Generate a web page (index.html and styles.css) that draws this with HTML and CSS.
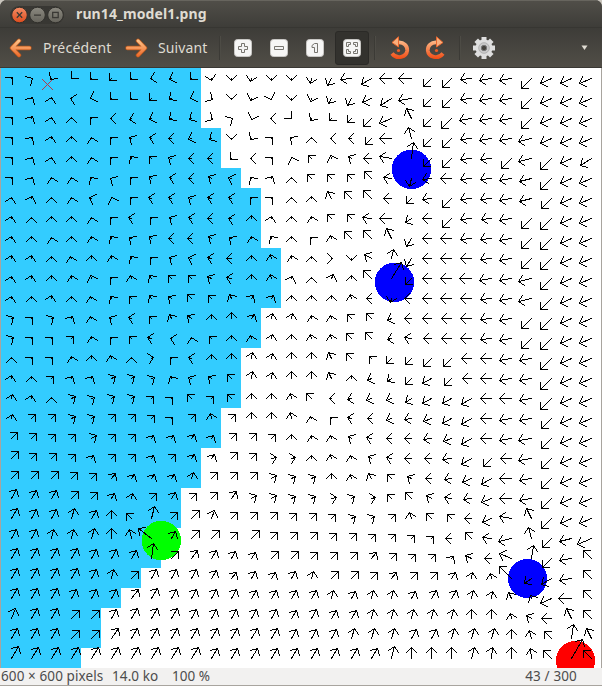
FILE: index.html
```html
<!DOCTYPE html>
<html lang="fr">
<head>
<meta charset="utf-8">
<title>run14_model1.png</title>
<link rel="stylesheet" href="styles.css">
</head>
<body>
<div class="window">
  <header class="titlebar">
    <svg class="controls" width="54" height="18" viewBox="0 0 54 18">
      <defs>
        <linearGradient id="close" x2="0" y2="1"><stop stop-color="#f58d66"/><stop offset="1" stop-color="#dd4b1c"/></linearGradient>
        <linearGradient id="plain" x2="0" y2="1"><stop stop-color="#8b8980"/><stop offset="1" stop-color="#65635b"/></linearGradient>
      </defs>
      <rect x="0" y="0" width="54" height="18" rx="9" fill="#383733"/>
      <g stroke="#31302c">
        <circle cx="9.5" cy="9" r="7.8" fill="url(#close)"/>
        <circle cx="27.5" cy="9" r="7.8" fill="url(#plain)"/>
        <circle cx="45.5" cy="9" r="7.8" fill="url(#plain)"/>
      </g>
      <g fill="none" stroke="#3a3935" stroke-width="1.3">
        <path d="M6.8 6.3l5.4 5.4M12.2 6.3l-5.4 5.4M24 9.2h7"/>
        <rect x="42.7" y="6.4" width="5.5" height="5.2"/>
      </g>
    </svg>
    <h1 class="title">run14_model1.png</h1>
  </header>
  <nav class="toolbar">
    <svg class="arrow" width="24" height="20" viewBox="0 0 24 20">
      <defs><linearGradient id="or" gradientUnits="userSpaceOnUse" x1="0" y1="2" x2="0" y2="18"><stop stop-color="#ffc58a"/><stop offset="1" stop-color="#ee6b2c"/></linearGradient></defs>
      <path d="M10 2.8L3 10l7 7.2M3.5 10H20.5" fill="none" stroke="#b5561c" stroke-width="4.4" stroke-linecap="round" stroke-linejoin="round"/>
      <path d="M10 2.8L3 10l7 7.2M3.5 10H20.5" fill="none" stroke="url(#or)" stroke-width="3" stroke-linecap="round" stroke-linejoin="round"/>
    </svg>
    <span class="label previous">Précédent</span>
    <svg class="arrow" width="24" height="20" viewBox="0 0 24 20">
      <path d="M14 2.8l7 7.2-7 7.2M20.5 10H3.5" fill="none" stroke="#b5561c" stroke-width="4.4" stroke-linecap="round" stroke-linejoin="round"/>
      <path d="M14 2.8l7 7.2-7 7.2M20.5 10H3.5" fill="none" stroke="url(#or)" stroke-width="3" stroke-linecap="round" stroke-linejoin="round"/>
    </svg>
    <span class="label next">Suivant</span>
    <i class="separator"></i>
    <span class="tool"><svg width="18" height="18" viewBox="0 0 18 18"><rect class="key" x=".5" y=".5" width="17" height="17" rx="3"/><path class="glyph" d="M7.5 4.5h3v3h3v3h-3v3h-3v-3h-3v-3h3z"/></svg></span>
    <span class="tool"><svg width="18" height="18" viewBox="0 0 18 18"><rect class="key" x=".5" y=".5" width="17" height="17" rx="3"/><path class="glyph" d="M4.500 7.500h9v3h-9z"/></svg></span>
    <span class="tool"><svg width="18" height="18" viewBox="0 0 18 18"><rect class="key" x=".5" y=".5" width="17" height="17" rx="3"/><path class="glyph" d="M6 6.500l2.500-2h3v9h-3v-5H6z"/></svg></span>
    <span class="tool pressed"><svg width="18" height="18" viewBox="0 0 18 18"><rect class="key" x=".5" y=".5" width="17" height="17" rx="3"/><path class="glyph" d="M3.500 3.500h4v2h-2v2h-2zM14.500 3.500h-4v2h2v2h2zM3.500 14.500h4v-2h-2v-2h-2zM14.500 14.500h-4v-2h2v-2h2z"/></svg></span>
    <i class="separator after-zoom"></i>
    <svg class="rotate left" width="22" height="26" viewBox="0 0 22 26">
      <defs><linearGradient id="ro" gradientUnits="userSpaceOnUse" x1="0" y1="2" x2="0" y2="24"><stop stop-color="#ffd0a0"/><stop offset="1" stop-color="#f04a12"/></linearGradient></defs>
      <path d="M9 7.500C15 7 18.500 11 18.200 15.500 17.500 22 8 25 3 18.500" fill="none" stroke="url(#ro)" stroke-width="3.800"/>
      <path d="M3 7.500L9.500 1.800V12z" fill="#f9ae7c" stroke="#e8672e"/>
      <circle cx="9.500" cy="15.500" r="1.600" fill="#f05a22"/>
    </svg>
    <svg class="rotate right" width="22" height="26" viewBox="0 0 22 26">
      <g transform="matrix(-1 0 0 1 22 0)">
      <path d="M9 7.500C15 7 18.500 11 18.200 15.500 17.500 22 8 25 3 18.500" fill="none" stroke="url(#ro)" stroke-width="3.800"/>
      <path d="M3 7.500L9.500 1.800V12z" fill="#f9ae7c" stroke="#e8672e"/>
      <circle cx="9.500" cy="15.500" r="1.600" fill="#f05a22"/>
      </g>
    </svg>
    <i class="separator after-rotate"></i>
    <svg class="gear" width="22" height="22" viewBox="-11 -11 22 22">
      <g fill="#dedede">
        <circle r="8.500"/>
        <path d="M-2.500-11h5v22h-5z"/><path d="M-2.500-11h5v22h-5z" transform="rotate(45)"/>
        <path d="M-2.500-11h5v22h-5z" transform="rotate(90)"/><path d="M-2.500-11h5v22h-5z" transform="rotate(135)"/>
      </g>
      <circle r="5.300" fill="#c9c9c9" stroke="#b2b2b2"/>
      <circle r="2.700" fill="#45433e" stroke="#777"/>
    </svg>
    <svg class="overflow" width="7" height="6" viewBox="0 0 7 6"><path d="M.5.500h6L3.500 5z" fill="#dfdbd2"/></svg>
  </nav>
  <main class="view">
    <svg class="field" width="600" height="600" viewBox="0 0 600 600" shape-rendering="crispEdges">
      <path fill="#33ccff" d="M0 0H200V60H220V100H240V120H260V180H280V240H260V280H240V340H220V380H200V420H180V460H160V500H140V520H120V540H100V580H80V600H0z"/>
      <circle cx="160.300" cy="472.500" r="19.700" fill="#0f0"/>
      <g fill="#00f">
        <circle cx="410.500" cy="101.300" r="19.700"/>
        <circle cx="393.500" cy="214.300" r="19.700"/>
        <circle cx="526.500" cy="510.500" r="19.700"/>
      </g>
      <circle cx="574.500" cy="592.500" r="19.700" fill="#f00"/>
      <path class="mark" d="M41.500 11.500l10 10M51.500 11.500l-10 10"/>
      <path class="vectors" id="vectors" d=""/>
    </svg>
  </main>
  <footer class="status">
    <span class="size">600 × 600 pixels</span>
    <span class="bytes">14.0 ko</span>
    <span class="zoom">100 %</span>
    <span class="index">43 / 300</span>
  </footer>
</div>
<script src="field.js"></script>
</body>
</html>
```
FILE: styles.css
```css
* { box-sizing: border-box; }

body {
  margin: 0;
  background: #c9c5bd;
  font-family: "Noto Sans", "Open Sans", sans-serif;
}

.window {
  width: 602px;
  height: 686px;
  display: flex;
  flex-direction: column;
  overflow: hidden;
  border-radius: 7px 7px 0 0;
  background: #3c3b37;
}

.titlebar {
  height: 28px;
  display: flex;
  align-items: center;
  padding-left: 10px;
  border-top: 1px solid #67655e;
  background: linear-gradient(#504e48, #3d3c38);
  box-shadow: inset 0 -1px #373632;
}

.controls { margin-top: 1px; }

.title {
  margin: -1px 0 0 12px;
  color: #dfdbd2;
  font-size: 14px;
  line-height: 20px;
  font-weight: 700;
  letter-spacing: 0.12px;
  white-space: nowrap;
}

.toolbar {
  height: 40px;
  display: flex;
  align-items: center;
  padding: 0 14px 0 9px;
  background: linear-gradient(#3d3c38, #514e47);
  border-bottom: 1px solid #3a3834;
}

.label {
  margin-left: 10px;
  color: #dfdbd2;
  font-size: 14px;
  line-height: 20px;
  white-space: nowrap;
}

.previous { width: 81px; letter-spacing: 0.2px; }
.next { width: 61px; letter-spacing: 0.1px; }

.separator {
  width: 2px;
  height: 24px;
  background: linear-gradient(90deg, #33322e, #56544d);
}

.tool {
  width: 34px;
  height: 34px;
  margin-left: 2px;
  display: flex;
  align-items: center;
  justify-content: center;
  border-radius: 3px;
}

.separator + .tool { margin-left: 5px; }

.pressed { margin-left: 3px; background: #33322e; border: 1px solid #2b2a27; }

.key { fill: #f6f6f5; stroke: #c8c7c4; }
.glyph { fill: #f3f3f3; stroke: #77756f; }

.after-zoom { margin-left: 5px; }
.rotate.left { margin-left: 13px; }
.rotate.right { margin-left: 13px; }
.after-rotate { margin-left: 13px; }
.gear { margin-left: 12px; }
.overflow { margin-left: auto; }

.view {
  height: 600px;
  padding: 0 1px;
  background: #a8a49e;
}

.field { display: block; background: #fff; }

.mark { fill: none; stroke: #b33a4a; stroke-width: 1; stroke-linecap: square; }
.vectors { fill: none; stroke: #000; stroke-width: 1; stroke-linecap: square; }

.status {
  height: 18px;
  display: flex;
  align-items: center;
  padding: 0 25px 0 1px;
  border-bottom: 1px solid #a8a49e;
  background: #f2f1f0;
  color: #4c4c4c;
  font-size: 13.500px;
  line-height: 17px;
  white-space: nowrap;
}

.size { width: 111px; letter-spacing: 0.1px; }
.bytes { width: 60px; letter-spacing: 0.1px; }
.index { margin-left: auto; letter-spacing: 0.15px; }
```
FILE: field.js
```javascript
// One row of arrows per entry. Each cell is a heading followed by a shaft length
// in base 36. Headings count 15 degree steps from east, counterclockwise (a = 0);
// an upper case letter adds half a step.
const rows = [
  "d1 c1 P1 p0 p1 p3 p2 M1 N2 p1 S2 s2 r3 s2 s2 r5 q8 Mb oc mc md pc pd Mb Mc Mc pe Nc Nc Nd",
  "d2 e1 f1 l1 N1 p2 p2 p3 O2 N1 w1 s1 Q2 T1 s2 Q3 q6 q8 Na od Md pc pd Mb Mc Mc pe Nc Nc Nd",
  "d2 e2 f1 g1 j1 m1 n2 N2 O2 o2 w1 c1 Q1 m1 v0 P2 p3 p6 pb Nd ib pc pe Mc Mc Mc pe Nc Nc Nd",
  "d2 D1 F2 g2 h1 j2 k2 l2 m3 N3 o2 s1 P1 d1 J1 g1 m1 m3 p8 mc hb pc pd Mb Mc Mc nd Nc Nc Nd",
  "d1 e1 F1 g2 h1 j1 I2 j3 k3 m3 m4 p1 m1 d2 H1 j4 H3 k4 m8 Lc Fg pc pd Mb Mb pe nd pf Nc od",
  "d2 e1 h1 G1 I1 k1 j2 J3 l2 m3 k4 K3 I1 e2 g1 j5 j6 j6 ja L8 r8 M9 mb Mb Mb Mc nc pf Nc Nd",
  "F1 E2 g1 h1 K2 H1 j2 l3 l3 k3 l4 l3 j2 d1 g1 g2 i8 ja jb m8 p7 M9 pd Mb Mb Mc nc pe Nc Nd",
  "F2 g1 g2 g2 h1 j1 l3 j2 k2 l3 m4 L3 g3 F2 g2 G2 j6 j6 L9 mc o7 m9 pd Mb Ma Mc pe pf Nc Nd",
  "F2 g2 G1 g2 G2 I2 J2 J3 m3 m4 k4 J2 G2 I2 g2 j1 h3 ja jb ib q9 m9 mb Mb Mb Mc pe pf Nc Nd",
  "F3 F3 g2 h2 g3 G3 I2 j2 k2 K3 L4 m5 g3 h4 G3 g2 a1 s2 k8 f9 q9 m9 mb mb Mb Mc pe pf Nc Nd",
  "F2 F3 g3 G3 H3 j2 h3 I4 j4 j4 k5 l5 g4 h4 E2 g1 E4 g3 jb ej p9 m9 mb mc Mc Mc nd pf Nc Nd",
  "F2 g2 F3 g2 h2 I2 j3 I4 J4 j5 j4 i5 D4 e3 g3 g3 g3 h4 m5 r4 m7 m9 mb mb Mb Mc nd pf Nc Nd",
  "c2 d2 c2 e2 h2 k2 l3 j3 i5 J5 g4 g6 e5 f5 F5 G3 h3 j5 j7 N4 m7 m9 ma mb Mb Mc pe pf Nc Nd",
  "c2 d2 d1 d3 G2 j2 j3 L4 l1 G1 j3 g3 h3 F4 g4 G4 h4 j7 j8 M4 L7 m8 ma mb Mb Mc pe pf Nc Nd",
  "g1 d2 d2 G2 g3 h3 g1 b2 j1 l3 g4 g5 F6 F5 g6 g6 i7 j7 j3 p7 p9 pb pb ma mb Mc Mc pf Nc Nd",
  "F3 g2 d3 e2 e2 c5 c4 c3 i2 k3 J4 j5 F7 F6 g7 g7 i7 g3 N4 O5 p8 oa pa m9 mb Mc Mc pf Nc Nd",
  "F4 F3 g1 c5 c3 c4 c4 d3 d2 j5 d3 j6 g5 g5 G5 j7 m2 M4 N5 N5 o7 oa oa oc mb mc Mc pf Nc Nd",
  "F4 d6 d5 c5 c4 d5 d5 d4 d2 d5 h5 d6 g6 g6 G6 h2 j2 l4 m4 N5 M7 N9 oa oc mb Mc Mc pe Nc Nd",
  "d8 d7 d6 d5 c6 d5 d5 e3 e3 e5 e4 d7 d7 d6 g4 G3 h3 k4 l5 m5 m7 M8 N9 ob mb Mc Md pe Nc Nd",
  "da d7 d7 d6 e4 d6 d5 e4 d6 e5 e5 d8 d7 b5 b4 g3 h4 h3 k4 L5 m7 m7 M9 ob pc mb Md pe Nc Nd",
  "da da da d8 d7 D6 e5 e5 e5 f6 d9 d9 d8 c6 c5 c5 g5 h4 i6 j5 k5 m6 M7 Na oc mc Mc pe Nc Nd",
  "ea e9 e9 da d8 e6 f5 d7 e7 d7 d9 D9 c6 c6 c5 c5 b5 c4 b4 j5 j8 k6 L7 M8 Nb mc Mc pe Nc Nd",
  "eb ea ea fa e9 g8 j7 fc d9 db E9 d8 d8 d8 d7 d7 d6 c5 c4 d5 h6 j7 j6 m7 Na Lc ib pe Nc Nd",
  "ea ea f9 f9 fa ga h9 Jg e8 db db d9 db d9 d9 d9 d7 d7 d6 d5 d4 d3 m6 j9 L9 nd hb pd nc Nf",
  "eb eb eb eb ea ea e9 Ff da Da e9 e8 e7 da da d9 d9 d8 D8 d7 d6 d5 D3 k7 m7 Kd Fd pd Mc jb",
  "eb eb eb eb ea f9 da ea ea ea e9 D8 e8 e7 e8 f7 da da d9 D8 d8 d8 e7 F6 h5 jh O9 oc Mc jb",
  "eb eb eb ea ea ea Db eb ea ea ea ea e9 e9 e9 e9 f8 e8 f8 f8 e8 e9 e9 f8 F7 i7 i3 Nc md jb",
  "Eb eb eb db db ea eb eb eb ea ea ea ea ea e9 ea e9 e9 f9 f9 f9 f9 f9 g9 g9 h5 k6 ma ib jb",
  "ec ec ec dc db Dc ec ec eb eb eb eb eb eb ea ea ea fa fa fa ea ea fa fa fa g9 h8 ja Fe ib",
  "ee ed ed ed ed ed ed ed ed ed ec ec ec ec ec ec ec ec ec fc gb gb gb fb Fb gb Ga jc em jb"
];

const STEP = 20;
const HEAD = 7.3;
let d = "";

rows.forEach((row, j) => {
  row.split(" ").forEach((cell, i) => {
    const lower = cell[0].toLowerCase();
    const half = cell[0] === lower ? 0 : 7.5;
    const angle = ((lower.charCodeAt(0) - 97) * 15 + half) * Math.PI / 180;
    const length = parseInt(cell[1], 36);
    const x = STEP / 2 + i * STEP;
    const y = STEP / 2 + j * STEP;
    const tx = x + Math.round(length * Math.cos(angle));
    const ty = y - Math.round(length * Math.sin(angle));
    const at = (a, b) => `${a + 0.5} ${b + 0.5}`;
    const arm = side => {
      const a = angle + Math.PI + side * Math.PI / 4;
      return at(tx + Math.round(HEAD * Math.cos(a)), ty - Math.round(HEAD * Math.sin(a)));
    };
    if (length > 0) d += `M${at(x, y)}L${at(tx, ty)}`;
    d += `M${arm(1)}L${at(tx, ty)}L${arm(-1)}`;
  });
});

document.getElementById("vectors").setAttribute("d", d);
```
